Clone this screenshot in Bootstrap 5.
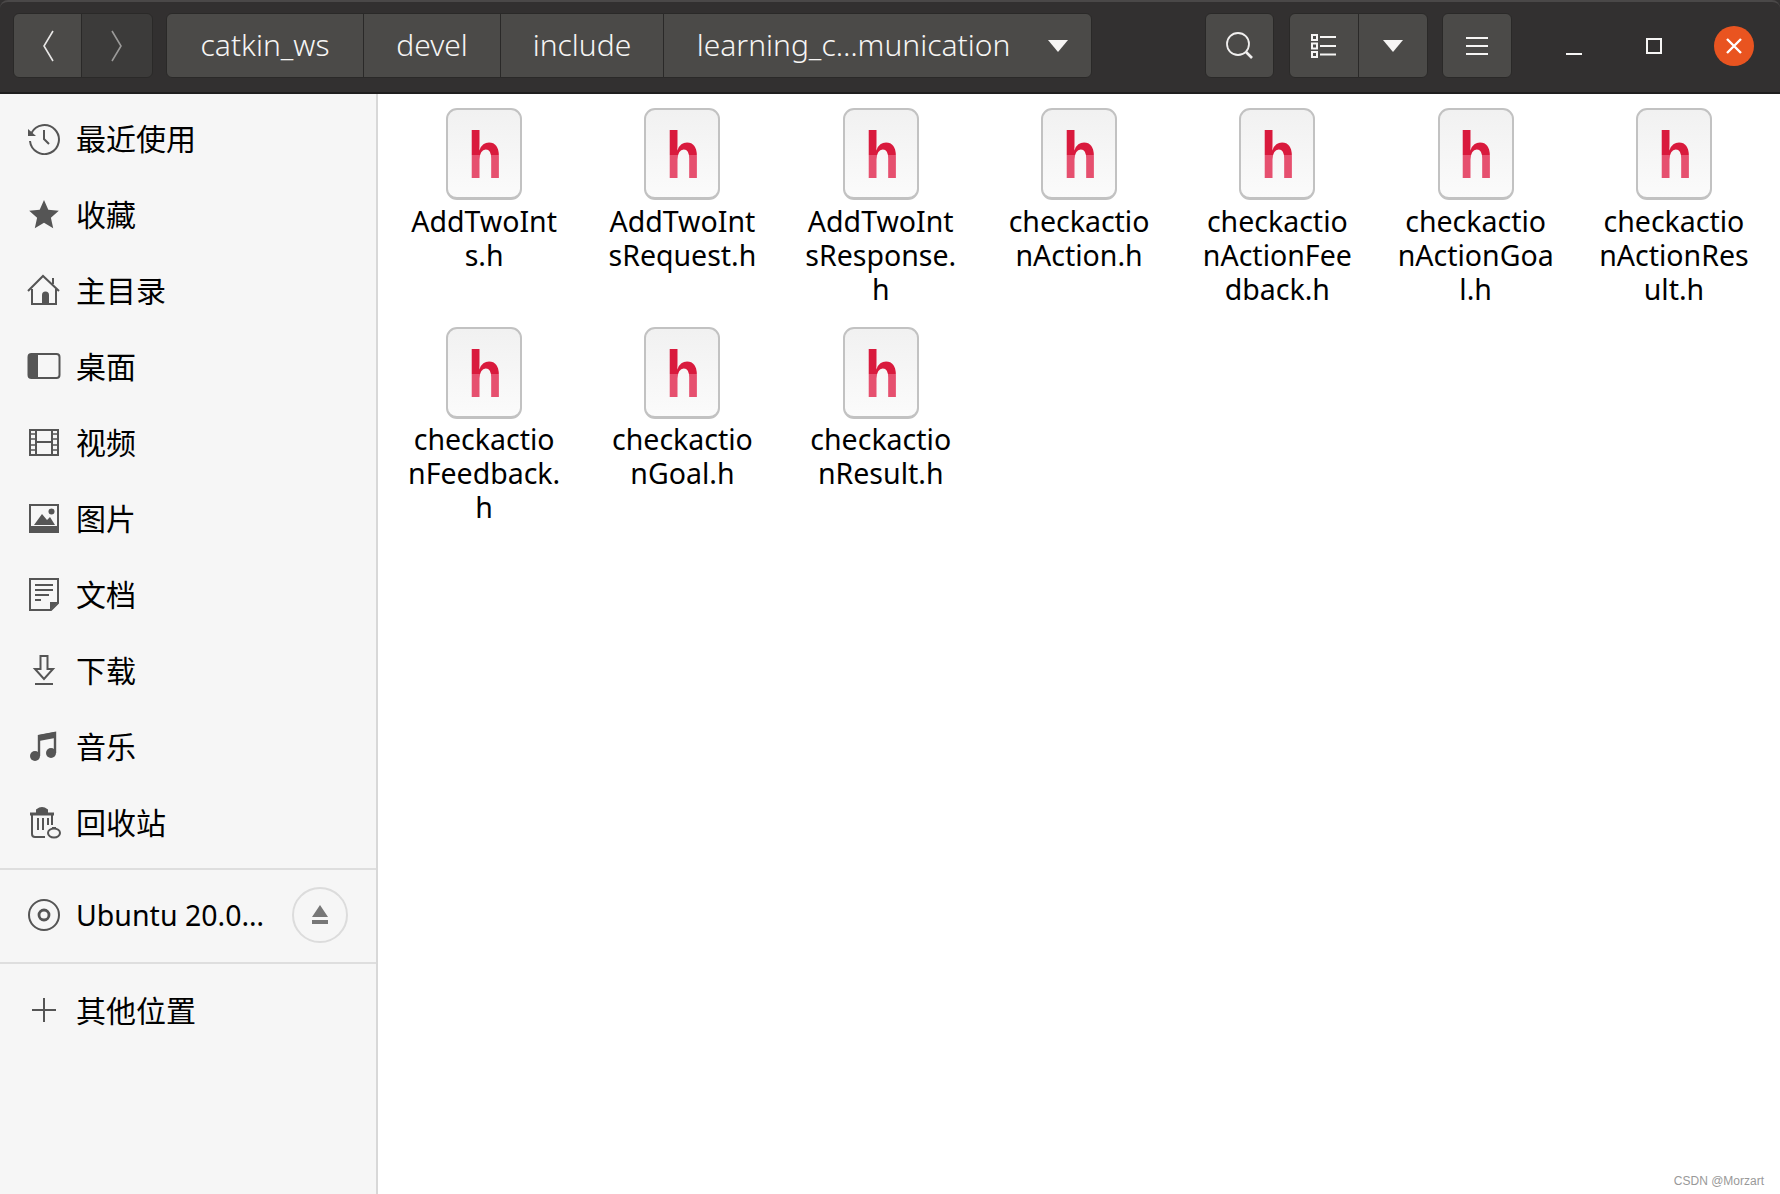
<!DOCTYPE html>
<html lang="zh">
<head>
<meta charset="utf-8">
<title>Files</title>
<link href="https://cdn.jsdelivr.net/npm/bootstrap@5.3.0/dist/css/bootstrap.min.css" rel="stylesheet">
<style>
html,body{height:100%;overflow:hidden}
body{background:#323030;font-family:"Noto Sans","Noto Sans CJK SC",sans-serif;color:#000}
.win-head{height:94px;background:#323030;border-top:2px solid #4a4848;border-bottom:2px solid #1f1e1e;border-radius:8px 8px 0 0;padding:0 0 3px 13px;flex:none}
.tb-btn{height:65px;padding:0;background:#4b4a48;border:1px solid #2a2928;color:#f6f5f4;font-size:30px;font-weight:300;line-height:1;border-radius:6px;display:flex;align-items:center;justify-content:center;white-space:nowrap}
.tb-btn:hover{background:#4b4a48;color:#f6f5f4;border-color:#2a2928}
.tb-off{background:#3c3b3a}
.tb-off:hover{background:#3c3b3a}
.tb-txt{padding-bottom:1px}
.w-back{width:69px}.w-fwd{width:72px}
.w-p1{width:198px;margin-left:13px}.w-p2{width:138px}.w-p3{width:164px}.w-p4{width:429px;gap:38px;padding-left:10px}
.w-find{width:69px;margin-left:113px}
.w-view{width:70px;margin-left:15px}.w-drop{width:70px}
.w-menu{width:70px;margin-left:14px}
.win-ctl{margin-left:45px;width:34px}
.win-ctl2{margin-left:46px;width:34px}
.win-close{margin-left:43px;width:40px;height:40px;border-radius:50%;background:#e95420}
.win-main{height:1100px;background:#fff}
.side-pane{width:378px;flex:none;background:#f6f6f6;border-right:2px solid #d8d8d8;padding-top:6px}
.side-row{height:76px;padding-left:27px;gap:15px;font-size:30px;color:#000}
.side-row>svg{width:34px;height:34px;flex:none}
.side-sep{height:2px;background:#dedede;border:0;opacity:1;margin:8px 0 6px}
.side-sep2{margin:0 0 8px}
.drive-row{font-size:28.5px;height:86px;padding-bottom:8px}
.eject-btn{width:56px;height:56px;border-radius:50%;border:2px solid #dcdcdc;margin-left:auto;margin-right:28px;flex:none}
.file-area{padding:14px 0 0 385px;margin-left:-378px;flex:1}
.file-grid{display:grid;grid-template-columns:repeat(7,198.3px);grid-auto-rows:218.5px}
.file-cell{font-size:28.5px;line-height:34px;color:#000;white-space:nowrap;text-align:center}
.doc-ic{width:76px;height:92px;border:2px solid #c2c2c2;border-bottom-width:3px;border-radius:11px;background:linear-gradient(#f1f1f1,#fbfbfb);margin-bottom:3.5px;padding:3px 0 0 2px}
.doc-h{font-family:"Liberation Sans",sans-serif;font-weight:700;font-size:66px;line-height:1;display:inline-block;transform:scaleX(.86);background:linear-gradient(#d91a3d 0 50%,#e6506f 50% 100%);-webkit-background-clip:text;background-clip:text;-webkit-text-fill-color:transparent}
.mark-csdn{position:absolute;right:16px;bottom:6px;font:12px "Liberation Sans",sans-serif;color:#999}
</style>
</head>
<body class="d-flex flex-column">
<header class="win-head d-flex align-items-center">
  <div class="btn-group">
    <button class="btn tb-btn w-back" aria-label="back"><svg width="14" height="34" viewBox="0 0 14 34"><path d="M12 2 3 17l9 15" fill="none" stroke="#e8e7e6" stroke-width="1.6"/></svg></button>
    <button class="btn tb-btn tb-off w-fwd" aria-label="forward"><svg width="14" height="34" viewBox="0 0 14 34"><path d="m2 2 9 15-9 15" fill="none" stroke="#9b9a99" stroke-width="1.6"/></svg></button>
  </div>
  <div class="btn-group">
    <button class="btn tb-btn w-p1"><span class="tb-txt">catkin_ws</span></button>
    <button class="btn tb-btn w-p2"><span class="tb-txt">devel</span></button>
    <button class="btn tb-btn w-p3"><span class="tb-txt">include</span></button>
    <button class="btn tb-btn w-p4"><span class="tb-txt">learning_c…munication</span><svg width="20" height="12" viewBox="0 0 20 12"><path d="M0 0h20L10 12z" fill="#f6f5f4"/></svg></button>
  </div>
  <button class="btn tb-btn w-find" aria-label="search"><svg width="30" height="30" viewBox="0 0 30 30"><circle cx="13" cy="13" r="11" fill="none" stroke="#f0efee" stroke-width="1.8"/><path d="m21 21 6 6" stroke="#f0efee" stroke-width="2.6"/></svg></button>
  <div class="btn-group">
    <button class="btn tb-btn w-view" aria-label="list"><svg width="26" height="24" viewBox="0 0 26 24" fill="none" stroke="#f6f5f4" stroke-width="2"><rect x="1" y="1" width="5" height="5"/><rect x="1" y="9.5" width="5" height="5"/><rect x="1" y="18" width="5" height="5"/><path d="M9 3h16M9 12h16M9 20.500h16"/></svg></button>
    <button class="btn tb-btn w-drop" aria-label="options"><svg width="20" height="12" viewBox="0 0 20 12"><path d="M0 0h20L10 12z" fill="#f6f5f4"/></svg></button>
  </div>
  <button class="btn tb-btn w-menu" aria-label="menu"><svg width="22" height="20" viewBox="0 0 22 20" stroke="#f6f5f4" stroke-width="2"><path d="M0 2h22M0 10h22M0 18h22"/></svg></button>
  <div class="win-ctl d-flex justify-content-center"><svg width="16" height="34" viewBox="0 0 16 34"><path d="M0 25h16" stroke="#f6f5f4" stroke-width="2"/></svg></div>
  <div class="win-ctl2 d-flex justify-content-center"><svg width="16" height="16" viewBox="0 0 16 16"><rect x="1" y="1" width="14" height="14" fill="none" stroke="#f6f5f4" stroke-width="2"/></svg></div>
  <div class="win-close d-flex align-items-center justify-content-center"><svg width="18" height="18" viewBox="0 0 18 18"><path d="m2 2 14 14M16 2 2 16" stroke="#fff" stroke-width="2.400"/></svg></div>
</header>
<main class="win-main d-flex position-relative">
  <nav class="side-pane">
    <div class="side-row d-flex align-items-center"><svg viewBox="0 0 34 34" fill="none" stroke="#555" stroke-width="2"><path d="M4.500 12A14.500 14.500 0 1 1 3 20"/><path d="M1 8v7h8z" fill="#555" stroke="none"/><path d="M17 9v9l5 5"/></svg><span>最近使用</span></div>
    <div class="side-row d-flex align-items-center"><svg viewBox="0 0 34 34"><path d="m17 3 4.300 9.700 10.500 1.100-7.900 7 2.300 10.400L17 25.800l-9.200 5.400 2.300-10.400-7.900-7 10.500-1.100z" fill="#555"/></svg><span>收藏</span></div>
    <div class="side-row d-flex align-items-center"><svg viewBox="0 0 34 34" fill="none" stroke="#555" stroke-width="2"><path d="M1 18 16 3l16 15M5 16v15h24V16"/><path d="M26 5v6"/><path d="M15 31V22a3.500 3.500 0 0 1 7 0v9z" fill="#555" stroke="none"/></svg><span>主目录</span></div>
    <div class="side-row d-flex align-items-center"><svg viewBox="0 0 34 34"><rect x="1.500" y="5" width="31" height="24" rx="3" fill="none" stroke="#555" stroke-width="2"/><path d="M4 5h7v24H4a3 3 0 0 1-3-3V8a3 3 0 0 1 3-3z" fill="#555"/></svg><span>桌面</span></div>
    <div class="side-row d-flex align-items-center"><svg viewBox="0 0 34 34" fill="none" stroke="#555" stroke-width="2"><rect x="3" y="5" width="28" height="25"/><path d="M9 5v25M25 5v25M9 17h16"/><path d="M3 9h6M3 14h6M3 20h6M3 25h6M25 9h6M25 14h6M25 20h6M25 25h6" stroke-width="1.500"/></svg><span>视频</span></div>
    <div class="side-row d-flex align-items-center"><svg viewBox="0 0 34 34"><rect x="3" y="4" width="28" height="27" fill="none" stroke="#555" stroke-width="2"/><path d="M3 25h28v6H3z" fill="#555"/><path d="M7 24 15 13l5 6 3-3 5 8z" fill="#555"/><circle cx="24.500" cy="10.500" r="3" fill="#555"/></svg><span>图片</span></div>
    <div class="side-row d-flex align-items-center"><svg viewBox="0 0 34 34" fill="none" stroke="#555" stroke-width="2"><path d="M3 2h28v24l-7 7H3z"/><path d="M8 8h18M8 13h18M8 18h14M8 23h6"/><path d="M31 25h-8v8z" fill="#555" stroke="none"/></svg><span>文档</span></div>
    <div class="side-row d-flex align-items-center"><svg viewBox="0 0 34 34" fill="none" stroke="#555" stroke-width="2"><path d="M13.500 3h7v13h5.500L17 26 8 16h5.500z"/><path d="M8 31h18"/></svg><span>下载</span></div>
    <div class="side-row d-flex align-items-center"><svg viewBox="0 0 34 34"><path d="M12 27V7l16-3v20" fill="none" stroke="#555" stroke-width="2.400"/><path d="M12 6l16-3v6l-16 3z" fill="#555"/><circle cx="8" cy="27" r="5" fill="#555"/><circle cx="24" cy="24" r="5" fill="#555"/></svg><span>音乐</span></div>
    <div class="side-row d-flex align-items-center"><svg viewBox="0 0 34 34" fill="none" stroke="#555" stroke-width="2"><path d="M3 9h24" stroke-width="3"/><path d="M10 8V5q5-4 10 0v3" fill="#555"/><path d="M5 9v20q0 3 3 3h10M25 9v11M11 13v12M16 13v12M21 13v7"/><ellipse cx="27" cy="28" rx="6" ry="4.500"/><path d="M25 23h4"/></svg><span>回收站</span></div>
    <hr class="side-sep">
    <div class="side-row drive-row d-flex align-items-center"><svg viewBox="0 0 34 34" fill="none" stroke="#555" stroke-width="2"><circle cx="17" cy="17" r="15"/><circle cx="17" cy="17" r="5" stroke-width="2.800"/></svg><span>Ubuntu 20.0…</span><div class="eject-btn d-flex align-items-center justify-content-center"><svg width="18" height="20" viewBox="0 0 18 20"><path d="M9 0l8 12H1zM1 15h16v4H1z" fill="#777"/></svg></div></div>
    <hr class="side-sep side-sep2">
    <div class="side-row d-flex align-items-center"><svg viewBox="0 0 34 34" stroke="#555" stroke-width="2"><path d="M17 5v24M5 17h24"/></svg><span>其他位置</span></div>
  </nav>
  <section class="file-area">
    <div class="file-grid">
      <div class="file-cell"><div class="doc-ic mx-auto d-flex align-items-center justify-content-center"><span class="doc-h">h</span></div><div>AddTwoInt<br>s.h</div></div>
      <div class="file-cell"><div class="doc-ic mx-auto d-flex align-items-center justify-content-center"><span class="doc-h">h</span></div><div>AddTwoInt<br>sRequest.h</div></div>
      <div class="file-cell"><div class="doc-ic mx-auto d-flex align-items-center justify-content-center"><span class="doc-h">h</span></div><div>AddTwoInt<br>sResponse.<br>h</div></div>
      <div class="file-cell"><div class="doc-ic mx-auto d-flex align-items-center justify-content-center"><span class="doc-h">h</span></div><div>checkactio<br>nAction.h</div></div>
      <div class="file-cell"><div class="doc-ic mx-auto d-flex align-items-center justify-content-center"><span class="doc-h">h</span></div><div>checkactio<br>nActionFee<br>dback.h</div></div>
      <div class="file-cell"><div class="doc-ic mx-auto d-flex align-items-center justify-content-center"><span class="doc-h">h</span></div><div>checkactio<br>nActionGoa<br>l.h</div></div>
      <div class="file-cell"><div class="doc-ic mx-auto d-flex align-items-center justify-content-center"><span class="doc-h">h</span></div><div>checkactio<br>nActionRes<br>ult.h</div></div>
      <div class="file-cell"><div class="doc-ic mx-auto d-flex align-items-center justify-content-center"><span class="doc-h">h</span></div><div>checkactio<br>nFeedback.<br>h</div></div>
      <div class="file-cell"><div class="doc-ic mx-auto d-flex align-items-center justify-content-center"><span class="doc-h">h</span></div><div>checkactio<br>nGoal.h</div></div>
      <div class="file-cell"><div class="doc-ic mx-auto d-flex align-items-center justify-content-center"><span class="doc-h">h</span></div><div>checkactio<br>nResult.h</div></div>
    </div>
  </section>
  <div class="mark-csdn">CSDN @Morzart</div>
</main>
<script src="https://cdn.jsdelivr.net/npm/bootstrap@5.3.0/dist/js/bootstrap.bundle.min.js"></script>
</body>
</html>
